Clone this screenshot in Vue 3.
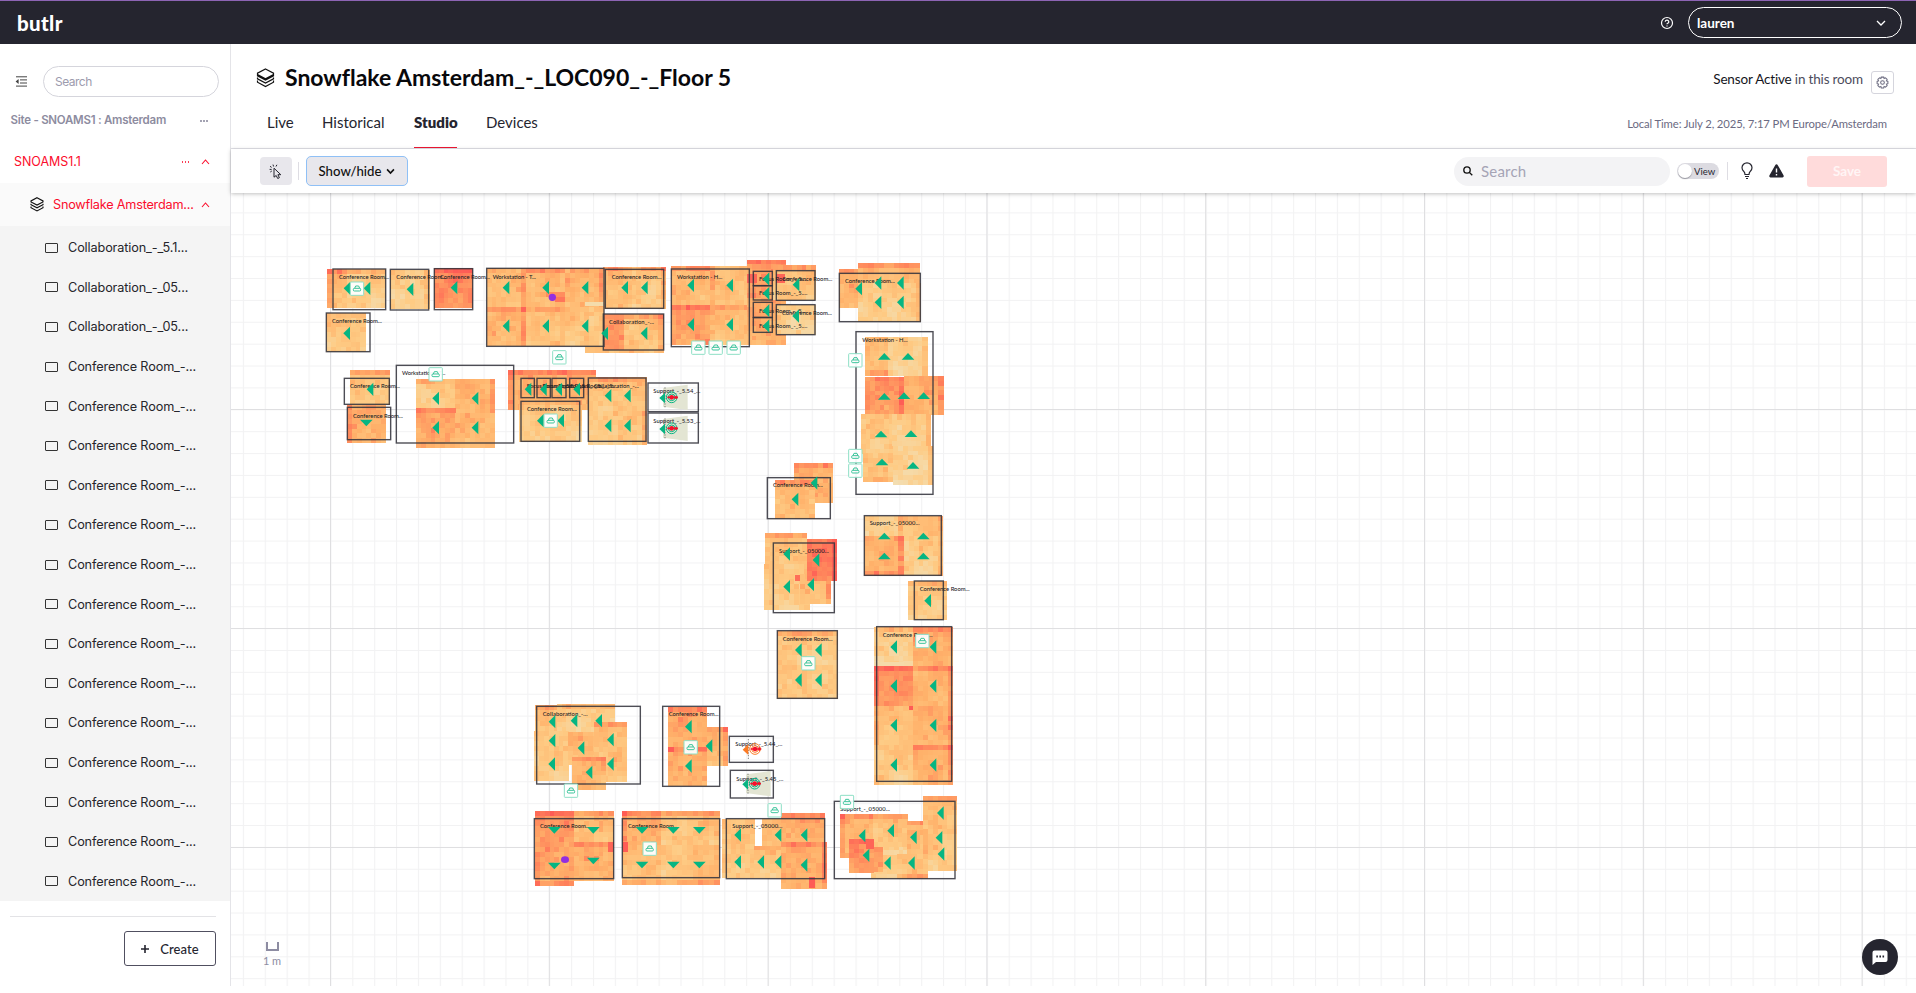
<script setup>
const rooms = [
  'Collaboration_-_5.1...', 'Collaboration_-_05...', 'Collaboration_-_05...',
  ...Array(14).fill('Conference Room_-...'),
]

const C = 'Conference Room...'
const F = 'Focus Room_-_5....'
const S = 'Support_-_05000...'
const L = 'Collaboration_-...'
const labelWidth = { [C]: 150, [F]: 145, [S]: 150, [L]: 135, 'Workstation - T...': 130, 'Workstation - H...': 136 }

// Every zone has its own origin on the plan and is drawn at 3 units per pixel.
// tiles: x, y, w, h, heat, hot edges    frames: x1, y1, x2, y2    arrows: x, y, direction
const zones = [
  {
    x: 310, y: 250,
    tiles: [
      [52, 57, 60, 117, .42, 'tl'], [110, 57, 117, 117, .24, 't'], [241, 60, 117, 117, .2, 'r'], [372, 55, 116, 118, .74, 't'],
      [49, 188, 117, 118, .3, ''], [530, 55, 117, 115, .4, 'r'], [647, 55, 118, 115, .42, 't'], [765, 55, 117, 115, .45, 'r'],
      [530, 170, 117, 118, .46, 'tr'], [647, 170, 118, 118, .36, 't'], [765, 170, 117, 118, .3, ''],
      [825, 289, 235, 19, .3, ''], [880, 50, 90, 126, .38, 't'], [965, 50, 101, 126, .28, 'tr'],
      [882, 193, 60, 107, .66, ''], [942, 193, 118, 107, .35, 'tr'],
      [121, 360, 118, 104, .33, 't'], [111, 465, 117, 113, .5, 'l'],
      [317, 386, 119, 89, .25, 't'], [436, 386, 118, 105, .48, 'r'], [317, 475, 119, 117, .55, 't'], [436, 490, 118, 102, .42, ''],
      [595, 361, 132, 117, .5, 'tl'], [727, 361, 131, 117, .5, 't'], [628, 450, 93, 124, .28, 't'], [721, 450, 93, 124, .26, 't'],
      [834, 380, 89, 102, .33, 't'], [923, 380, 88, 102, .35, 't'], [834, 482, 89, 102, .25, ''], [923, 482, 88, 102, .3, 'r'],
    ],
    hot: [[708, 127, 57, 14, .72], [736, 141, 29, 14, .85], [825, 155, 57, 14, .03]],
    frames: [
      [69, 57, 227, 179], [241, 58, 356, 180], [373, 56, 488, 179], [49, 189, 180, 305], [530, 55, 882, 289], [886, 58, 1061, 175],
      [880, 192, 1061, 300], [103, 385, 238, 463], [112, 472, 242, 569], [259, 346, 611, 579], [633, 385, 673, 443],
      [681, 385, 721, 443], [726, 385, 768, 443], [779, 385, 821, 443], [633, 454, 809, 574], [835, 384, 1008, 574],
      [1014, 399, 1165, 485], [1014, 489, 1165, 579],
    ],
    arrows: [
      [111, 115], [171, 115], [300, 118], [432, 113], [110, 250], [588, 113], [707, 113], [825, 113], [588, 228], [707, 228], [825, 228],
      [944, 113], [1003, 113], [884, 250], [1002, 250], [180, 418], [169, 519, 'd'], [377, 445], [495, 445], [377, 533], [495, 533],
      [654, 418], [700, 418], [746, 418], [800, 418], [691, 512], [752, 512], [894, 437], [952, 437], [894, 527], [952, 527],
    ],
    labels: [
      [87, 87, C], [259, 87, C], [390, 87, C], [66, 219, C], [548, 87, 'Workstation - T...'], [905, 87, C], [897, 222, L],
      [120, 414, C], [129, 504, C], [276, 375, 'Workstation - T...'], [650, 414, F], [697, 414, F], [744, 414, F], [780, 414, F],
      [852, 414, L], [651, 483, C], [1030, 429, 'Support_-_5.54_...'], [1030, 519, 'Support_-_5.53_...'],
    ],
    dots: [[727, 142, 11, 11]],
    badges: [[141, 116], [748, 322], [377, 373], [722, 512]],
    sensors: [[1085, 442, '#08b482', 1], [1085, 535, '#08b482', 1]],
  },
  {
    x: 660, y: 250,
    tiles: [
      [33, 48, 117, 117, .42, 't'], [150, 48, 118, 117, .37, 'l'], [33, 165, 117, 118, .6, 't'], [150, 165, 118, 118, .38, 't'],
      [260, 29, 117, 115, .62, 't'], [260, 144, 117, 141, .52, ''], [340, 45, 127, 105, .35, 't'], [348, 165, 118, 90, .18, ''],
      [537, 57, 60, 117, .48, 't'], [595, 40, 183, 62, .42, 't'], [595, 100, 187, 115, .25, 'r'],
    ],
    hot: [[260, 72, 30, 28, .95], [348, 72, 28, 28, .95]],
    frames: [
      [34, 57, 268, 290], [280, 64, 337, 107], [280, 107, 337, 150], [280, 157, 337, 202], [280, 203, 337, 247],
      [349, 62, 465, 151], [349, 164, 465, 254], [538, 70, 781, 215],
    ],
    arrows: [
      [92, 106], [209, 106], [92, 224], [209, 224], [318, 87], [318, 130], [318, 182], [318, 228], [408, 104], [407, 198],
      [596, 116], [654, 99], [721, 99], [654, 157], [721, 157],
    ],
    labels: [
      [51, 87, 'Workstation - H...'], [297, 93, F], [297, 136, F], [297, 189, F], [297, 234, F], [367, 93, C], [366, 195, C], [555, 99, C],
    ],
    badges: [[115, 293], [167, 293], [221, 293]],
  },
  {
    x: 820, y: 320,
    tiles: [
      [135, 50, 70, 116, .4, 'b'], [205, 50, 117, 116, .18, 'r'], [135, 170, 117, 113, .66, 'r'], [252, 168, 118, 116, .5, 'r'],
      [124, 283, 96, 118, .3, ''], [216, 283, 115, 95, .22, 'r'], [128, 400, 92, 84, .3, 'b'], [220, 377, 118, 117, .15, 'r'],
      [133, 587, 117, 60, .2, 'r'], [250, 587, 119, 60, .38, 'r'], [133, 647, 117, 120, .5, 'rb'], [252, 647, 117, 120, .24, 'r'],
      [264, 783, 117, 117, .28, 't'],
    ],
    frames: [[108, 35, 339, 523], [133, 587, 364, 766], [283, 783, 370, 899]],
    arrows: [
      [193, 109, 'u'], [264, 109, 'u'], [193, 229, 'u'], [252, 227, 'u'], [311, 227, 'u'], [183, 342, 'u'], [273, 341, 'u'],
      [186, 426, 'u'], [279, 436, 'u'], [193, 648, 'u'], [310, 648, 'u'], [193, 708, 'u'], [310, 708, 'u'], [323, 842],
    ],
    labels: [[127, 66, 'Workstation - H...'], [149, 615, S], [299, 813, C]],
    badges: [[106, 121], [106, 408], [106, 452]],
  },
  {
    x: 750, y: 450,
    tiles: [
      [132, 40, 117, 117, .48, 't'], [76, 90, 117, 117, .4, 't'],
      [46, 250, 125, 125, .36, 't'], [42, 342, 136, 137, .26, ''], [150, 372, 92, 90, .4, 'r'], [170, 266, 90, 126, .82, 'r'],
      [82, 542, 90, 102, .32, 't'], [172, 542, 91, 102, .24, 't'], [82, 644, 90, 103, .32, ''], [172, 644, 91, 103, .26, ''],
      [372, 530, 118, 119, .2, 't'], [490, 530, 118, 119, .52, 't'], [372, 649, 118, 118, .7, 'tl'], [490, 649, 118, 118, .45, 'rt'],
      [372, 767, 118, 119, .33, 'l'], [490, 767, 118, 119, .5, 'r'], [372, 886, 118, 118, .28, ''], [490, 886, 118, 118, .5, 'tr'],
    ],
    hot: [[134, 375, 16, 18, .9], [372, 635, 90, 14, .05], [476, 767, 14, 14, 1]],
    frames: [[52, 83, 241, 206], [70, 279, 253, 488], [82, 542, 262, 745], [380, 530, 605, 994]],
    arrows: [
      [192, 99], [135, 148], [110, 312], [198, 330], [110, 410], [182, 404], [145, 600], [205, 600], [145, 690], [205, 690],
      [431, 591], [549, 591], [431, 708], [549, 708], [431, 826], [549, 826], [431, 945], [549, 945],
    ],
    labels: [[69, 111, C], [87, 309, S], [98, 573, C], [398, 561, C]],
    badges: [[175, 640], [517, 573]],
  },
  {
    x: 520, y: 690,
    tiles: [
      [45, 45, 100, 110, .34, 't'], [110, 42, 175, 82, .22, 't'], [42, 122, 103, 150, .28, ''], [145, 125, 88, 100, .4, ''],
      [222, 97, 98, 177, .38, 't'], [156, 200, 101, 98, .45, 't'],
      [445, 52, 116, 118, .54, 't'], [445, 170, 116, 118, .5, 't'], [561, 110, 63, 117, .42, 'tr'],
      [45, 363, 117, 123, .64, 't'], [162, 363, 118, 93, .4, 't'], [45, 486, 117, 100, .54, 'lb'], [162, 456, 118, 116, .5, 't'],
      [306, 363, 117, 120, .5, 'lt'], [423, 363, 95, 103, .32, 't'], [518, 363, 80, 103, .36, 't'],
      [306, 466, 117, 118, .38, 'b'], [423, 466, 95, 118, .3, 'b'], [518, 466, 80, 118, .42, 'b'],
      [605, 388, 98, 176, .32, ''], [725, 388, 60, 80, .38, ''], [703, 467, 80, 97, .3, 't'],
      [782, 370, 133, 90, .52, 't'], [782, 457, 138, 138, .52, 'tr'],
    ],
    hot: [[445, 170, 18, 15, 1], [531, 170, 30, 12, .9], [309, 457, 15, 30, 1], [867, 560, 18, 33, 1], [264, 456, 15, 30, .95]],
    frames: [
      [50, 49, 361, 282], [428, 49, 599, 289], [628, 139, 760, 217], [631, 241, 760, 324], [43, 386, 281, 566], [307, 386, 599, 563],
      [619, 386, 914, 566],
    ],
    arrows: [
      [96, 95], [162, 92], [236, 92], [96, 152], [183, 174], [271, 149], [95, 222], [207, 247], [271, 222], [505, 110], [567, 168],
      [505, 228], [103, 421, 'd'], [220, 421, 'd'], [103, 528, 'd'], [220, 513, 'd'], [366, 421, 'd'], [460, 421, 'd'], [538, 421, 'd'],
      [366, 525, 'd'], [460, 525, 'd'], [538, 525, 'd'], [653, 435], [774, 435], [852, 435], [653, 516], [722, 516], [774, 516], [852, 525],
    ],
    labels: [
      [68, 78, L], [446, 78, C], [646, 168, 'Support_-_5.44_...'], [649, 273, 'Support_-_5.45_...'], [60, 414, C], [324, 414, C], [637, 414, S],
    ],
    dots: [[135, 509, 12, 10]],
    badges: [[153, 302], [512, 172], [389, 476], [764, 361]],
    sensors: [[705, 177, '#fb7a24', 0], [704, 281, '#08b482', 1]],
  },
  {
    x: 800, y: 780,
    tiles: [
      [120, 102, 100, 130, .42, 'tl'], [221, 195, 164, 32, .14, ''], [220, 102, 102, 98, .34, 't'], [320, 122, 68, 100, .42, 't'],
      [370, 48, 100, 100, .38, 't'], [370, 148, 100, 124, .28, 'l'], [213, 225, 80, 72, .26, ''], [291, 222, 92, 74, .35, 'b'],
      [147, 177, 74, 100, .68, 't'], [221, 200, 27, 76, .65, ''],
    ],
    hot: [[197, 180, 24, 26, .95]],
    frames: [[103, 64, 465, 296]],
    arrows: [[186, 167], [272, 152], [340, 172], [421, 99], [417, 173], [423, 222], [198, 226], [262, 249], [334, 249]],
    labels: [[120, 93, S]],
    badges: [[141, 66]],
  },
]

const stops = [[243, 222, 178], [254, 203, 132], [255, 177, 106], [255, 136, 92], [254, 92, 86]]
function colour(v) {
  const t = Math.min(.999, Math.max(0, v)) * 4
  const i = Math.floor(t)
  const c = stops[i].map((a, k) => Math.round(a + (stops[i + 1][k] - a) * (t - i)))
  return `rgb(${c.join(',')})`
}
let state = 4211
function random() {
  state = (state * 16807) % 2147483647
  return state / 2147483647
}
function cellsOf([x, y, w, h, heat, edges]) {
  const nx = Math.max(1, Math.round(w / 14.7))
  const ny = Math.max(1, Math.round(h / 14.7))
  const px = random() * 6
  const py = random() * 6
  const cells = []
  for (let j = 0; j < ny; j++) {
    for (let i = 0; i < nx; i++) {
      // the lower middle of a sensor tile reads cooler than its top rows
      let v = heat + .03 - (j / ny) * .1 + (random() - .5) * .15 + Math.sin(i * .8 + px) * Math.cos(j * .7 + py) * .08
      if (random() > .92) v += .12
      const edge = .14 + random() * .12
      if (edges.includes('t') && j === 0) v += edge
      if (edges.includes('b') && j === ny - 1) v += edge
      if (edges.includes('l') && i === 0) v += edge
      if (edges.includes('r') && i === nx - 1) v += edge
      cells.push({ x: x + i * w / nx, y: y + j * h / ny, w: w / nx + .6, h: h / ny + .6, fill: colour(v) })
    }
  }
  return cells
}
for (const z of zones) z.cells = z.tiles.flatMap(cellsOf)

const arrowShape = {
  l: '-10,0 10,-20 10,20',
  u: '0,-10 19,10 -19,10',
  d: '0,10 19,-10 -19,-10',
}
</script>

<template>
  <div class="app">
    <header class="topbar">
      <span class="logo">butlr</span>
      <div class="account">
        <svg class="help" viewBox="0 0 14 14"><circle cx="7" cy="7" r="5.500" /><path d="M5.200 5.700a1.800 1.700 0 1 1 2.500 1.600q-.7.3-.7 1" /><path d="M7 9.600v.9" /></svg>
        <div class="user"><span>lauren</span><svg viewBox="0 0 10 6"><path d="M1 1l4 4 4-4" /></svg></div>
      </div>
    </header>

    <div class="body">
      <aside class="sidebar">
        <div class="find">
          <svg viewBox="0 0 12 11"><path d="M1 .8h11M5 3.900h7M5 7h7M1 10.100h11" /><path class="solid" d="M3.600 3v5L.6 5.500z" /></svg>
          <div class="input">Search</div>
        </div>
        <div class="site"><span>Site - SNOAMS1 : Amsterdam</span><i class="dots" /></div>
        <div class="building"><span>SNOAMS1.1</span><i class="dots" /><svg class="caret" viewBox="0 0 9 6"><path d="M1 5l3.500-4L8 5" /></svg></div>
        <div class="floor">
          <svg class="layers" viewBox="0 0 18 20"><path d="M9 1L17 5.200V6.500L9 10.700L1 6.500V5.200ZM1 9V10.200L9 14.400L17 10.200V9M1 12.800V14.200L9 18.600L17 14.200V12.800" /></svg>
          <span>Snowflake Amsterdam...</span>
          <svg class="caret" viewBox="0 0 9 6"><path d="M1 5l3.500-4L8 5" /></svg>
        </div>
        <ul class="rooms">
          <li v-for="(r, i) in rooms" :key="i"><i /><span>{{ r }}</span></li>
        </ul>
        <div class="foot">
          <button class="create"><svg viewBox="0 0 8 8"><path d="M4 0v8M0 4h8" /></svg><span>Create</span></button>
        </div>
      </aside>

      <main class="main">
        <section class="head">
          <div class="title-row">
            <svg class="layers" viewBox="0 0 18 20"><path d="M9 1L17 5.200V6.500L9 10.700L1 6.500V5.200ZM1 6.500V7.800L9 12L17 7.800V6.500M1 9.500V10.800L9 15L17 10.800V9.500M1 12.500V14.200L9 18.600L17 14.200V12.500" /></svg>
            <h1>Snowflake Amsterdam_-_LOC090_-_Floor 5</h1>
            <p class="sensor"><b>Sensor Active</b> in this room</p>
            <button class="gear"><svg viewBox="0 0 14 14"><path d="M5.700 1.200h2.600l.4 1.500 1.500-.8 1.800 1.800-.8 1.500 1.600.5v2.600l-1.600.5.8 1.500-1.800 1.800-1.500-.8-.4 1.500H5.700l-.4-1.500-1.500.8L2 10.300l.8-1.500-1.600-.5V5.700l1.600-.5L2 3.700l1.800-1.800 1.500.8z" /><circle cx="7" cy="7" r="2" /></svg></button>
          </div>
          <div class="tab-row">
            <nav class="tabs">
              <a class="t1">Live</a><a class="t2">Historical</a><a class="t3 on">Studio</a><a class="t4">Devices</a>
            </nav>
            <span class="time">Local Time: July 2, 2025, 7:17 PM Europe/Amsterdam</span>
          </div>
        </section>

        <section class="tools">
          <button class="pointer"><svg viewBox="0 0 14 15"><path d="M5 4.200v9l2.200-1.700 1.500 3 1.700-.8-1.500-3h2.900z" /><path d="M4.600 2.500L4 .6M7 2.500L7.900.8M2.600 3.400L1 2.300M2.600 5.400H.6M2.800 7L1.300 8" /></svg></button>
          <i class="sep" />
          <button class="toggle"><span>Show/hide</span><svg viewBox="0 0 10 7"><path d="M1.200 1.200L5 5.200l3.800-4" /></svg></button>
          <div class="search"><svg viewBox="0 0 11 11"><circle cx="4.400" cy="4.400" r="3.500" /><path d="M7 7l3.200 3.200" /></svg><span>Search</span></div>
          <div class="switch"><i /><span>View</span></div>
          <i class="sep sep2" />
          <svg class="bulb" viewBox="0 0 12 18"><path d="M4 12.500q0-1.800-1.400-3.300A5 5 0 0 1 1 5.800a5 5 0 0 1 10 0q0 2-1.600 3.400Q8 10.700 8 12.500zM4 14.500h4M5 16.500h2" /></svg>
          <svg class="warn" viewBox="0 0 15 14"><path d="M7.500.3q.8 0 1.300.9l5.700 10q.8 2-1 2.200h-12q-1.800-.2-1-2.200l5.700-10q.5-.9 1.300-.9z" /><path class="mark" d="M7.500 4.500v4M7.500 10v1.400" /></svg>
          <button class="save">Save</button>
        </section>

        <section class="canvas">
          <svg class="plan" viewBox="231 193 1685 793">
            <defs>
              <pattern id="minor" x="330.400" y="409.300" width="21.880" height="21.880" patternUnits="userSpaceOnUse">
                <path d="M0 .5H21.880M.5 0V21.880" stroke="#f2f2f3" stroke-width="1.200" fill="none" />
              </pattern>
              <g id="badge">
                <rect class="badge" x="-20" y="-20" width="40" height="40" rx="2" />
                <path class="badge-icon" d="M-11 2q0-3 3-3H8q3 0 3 3v2q0 3-3 3H-8q-3 0-3-3zM-7-1l3-7H5l3 7" />
              </g>
            </defs>
            <rect x="231" y="193" width="1685" height="793" fill="url(#minor)" />
            <path v-for="n in 8" :key="'v' + n" class="major" :d="`M${330.500 + (n - 1) * 218.800} 193V986`" />
            <path v-for="n in 3" :key="'h' + n" class="major" :d="`M231 ${409.500 + (n - 1) * 219}H1916`" />
            <g v-for="(z, k) in zones" :key="k" :transform="`translate(${z.x} ${z.y}) scale(.33333)`">
              <g shape-rendering="crispEdges">
                <rect v-for="(c, i) in z.cells" :key="i" :x="c.x" :y="c.y" :width="c.w" :height="c.h" :fill="c.fill" />
                <rect v-for="(c, i) in z.hot" :key="'h' + i" :x="c[0]" :y="c[1]" :width="c[2]" :height="c[3]" :fill="colour(c[4])" />
              </g>
              <path v-for="(s, i) in (z.sensors || []).filter(s => s[3])" :key="'c' + i" class="cone" :d="`M${s[0] - 26} ${s[1] - 28}l74-10v76l-74-10z`" />
              <rect v-for="(f, i) in z.frames" :key="'f' + i" class="frame" :x="f[0]" :y="f[1]" :width="f[2] - f[0]" :height="f[3] - f[1]" />
              <text v-for="(l, i) in z.labels" :key="'l' + i" class="label" :x="l[0]" :y="l[1]" :textLength="labelWidth[l[2]] || 141">{{ l[2] }}</text>
              <polygon v-for="(a, i) in z.arrows" :key="'a' + i" class="arrow" :transform="`translate(${a[0]} ${a[1]})`" :points="arrowShape[a[2] || 'l']" />
              <ellipse v-for="(d, i) in z.dots" :key="'d' + i" class="dot" :cx="d[0]" :cy="d[1]" :rx="d[2]" :ry="d[3]" />
              <g v-for="(s, i) in z.sensors" :key="'s' + i" :transform="`translate(${s[0]} ${s[1]})`">
                <path d="M-20-30V32" stroke="#666" stroke-width="2.500" stroke-dasharray="4 4" />
                <path d="M-37 2l17-16v32z" :fill="s[2]" />
                <g fill="none" stroke-width="3" :stroke="s[2]"><circle r="16" /><circle r="10" /></g>
                <circle r="7" fill="#f3122b" /><path d="M-13 0H19M13-5v10" stroke="#f3122b" stroke-width="5" />
              </g>
              <use v-for="(b, i) in z.badges" :key="'b' + i" href="#badge" :x="b[0]" :y="b[1]" />
            </g>
          </svg>
          <div class="scale"><i /><span>1 m</span></div>
          <button class="chat"><svg viewBox="0 0 16 15"><path d="M2.500.5h11q2 0 2 2v7.500q0 2-2 2H4l-3.500 3V2.500q0-2 2-2z" /><path class="pips" d="M4.300 6.500h1.600M7.400 6.500H9M10.500 6.500h1.600" /></svg></button>
        </section>
      </main>
    </div>
  </div>
</template>

<style>
html, body { margin: 0; background: #fff; overflow: hidden; }
</style>

<style scoped>
.app { height: 993px; font-family: Lato, "Open Sans", sans-serif; color: #25252f; display: flex; flex-direction: column; overflow: hidden; }
* { box-sizing: border-box; }
svg { fill: none; stroke: currentColor; display: block; flex: none; }
button { font: inherit; color: inherit; padding: 0; border: 0; flex: none; display: flex; align-items: center; justify-content: center; }
.topbar { height: 44px; flex: none; background: #25252f; border-top: 1px solid #8d64b4; display: flex; align-items: center; justify-content: space-between; padding: 0 14px 0 17px; color: #fff; }
.logo { font-size: 20.500px; font-weight: 900; letter-spacing: .35px; line-height: 20px; }
.account { display: flex; align-items: center; gap: 14px; }
.help { width: 14px; height: 14px; stroke-width: 1.200; }
.user { width: 214px; height: 31px; border: 1px solid #fff; border-radius: 16px; display: flex; align-items: center; justify-content: space-between; padding: 0 15px 0 8px; font-size: 13.500px; font-weight: 700; }
.user svg { width: 10px; height: 6px; stroke-width: 1.300; }
.body { flex: 1; display: flex; min-height: 0; }

.sidebar { width: 231px; height: 942px; flex: none; border-right: 1px solid #e4e4e8; font-family: Inter, sans-serif; font-size: 12.500px; }
.find { display: flex; align-items: center; padding: 22px 11px 0 15px; justify-content: space-between; }
.find svg { width: 12px; height: 11px; stroke-width: 1; color: #444; }
.find .solid { fill: #444; stroke: none; }
.input { width: 176px; height: 31px; border: 1px solid #d5d5dc; border-radius: 16px; line-height: 29px; padding-left: 11px; color: #9c9bad; font-size: 12px; letter-spacing: -.5px; }
.site { display: flex; justify-content: space-between; padding: 0 22px 0 10.500px; height: 47px; line-height: 47px; color: #8d8ca0; font-weight: 600; font-size: 11.500px; letter-spacing: -.25px; }
.site, .building, .floor { align-items: center; }
.dots { width: 8px; height: 2px; background: repeating-linear-gradient(90deg, currentColor 0 1.500px, transparent 1.500px 3px); opacity: .8; }
.building { display: flex; height: 39px; padding: 0 20px 4px 14px; color: #fb0d2c; }
.building span { flex: 1; letter-spacing: -.05px; }
.building .dots { margin-right: 11px; }
.caret { width: 9px; height: 6px; stroke-width: 1.100; color: #fb0d2c; }
.floor { display: flex; height: 43px; background: #fafafa; padding: 0 20px 0 30px; color: #fb0d2c; }
.floor span { flex: 1; padding-left: 9px; font-size: 12.700px; letter-spacing: -.22px; white-space: nowrap; }
.floor .layers { width: 14px; height: 15px; color: #111; stroke-width: 1.500; }
.rooms { list-style: none; margin: 0; padding: 2px 0 0 45px; height: 675px; background: #f4f4f4; }
.rooms li { height: 39.600px; display: flex; align-items: center; gap: 10px; color: #25252b; }
.rooms i { width: 13px; height: 10px; border: 1.500px solid #333; border-radius: 1px; }
.rooms span { font-size: 12.700px; letter-spacing: -.13px; }
.foot { margin: 15px 14px 0 10px; border-top: 1px solid #e3e3e6; display: flex; justify-content: flex-end; padding-top: 14px; }
.create { width: 92px; height: 35px; border: 1px solid #504f60; border-radius: 3px; background: #fff; gap: 11px; font-family: Lato, sans-serif; font-size: 13px; font-weight: 500; letter-spacing: .1px; }
.create svg { width: 8px; height: 8px; stroke-width: 1.600; }

.main { flex: 1; display: flex; flex-direction: column; min-width: 0; }
.head { height: 105px; flex: none; border-bottom: 1px solid #e2e2e8; }
.title-row { height: 62px; display: flex; align-items: flex-start; padding: 0 22px 0 25px; }
.title-row .layers { width: 19px; height: 20px; margin-top: 24px; stroke-width: 1.200; color: #111; }
h1 { flex: 1; margin: 18px 0 0 10px; font-size: 23px; line-height: 30px; font-weight: 700; letter-spacing: -.02px; color: #08080b; }
.sensor { margin: 26px 8px 0 0; font-size: 13.500px; letter-spacing: -.17px; line-height: 18px; color: #4d4c5c; }
.sensor b { font-weight: 400; color: #15151c; }
.gear { margin-top: 27px; width: 23px; height: 23px; border: 1px solid #d5d5dd; border-radius: 3px; background: #fff; color: #6c6b80; }
.gear svg { width: 13px; height: 13px; stroke-width: 1.100; }
.tab-row { display: flex; justify-content: space-between; height: 42px; padding: 0 29px 0 36px; }
.tabs { display: flex; gap: 28px; font-size: 15px; line-height: 33px; }
.tabs a { white-space: nowrap; }
.t1 { width: 27px; } .t2 { width: 64px; } .t3 { width: 43px; } .t4 { width: 52px; margin-left: 1px; }
.tabs .on { font-weight: 800; line-height: 32px; border-bottom: 1px solid #ee1733; height: 42px; }
.time { font-size: 11.300px; letter-spacing: -.12px; line-height: 36px; color: #6b6a82; }
.tools { height: 44px; flex: none; display: flex; align-items: center; padding: 0 29px; background: #fff; position: relative; z-index: 1; box-shadow: 0 1px 4px rgba(0, 0, 0, .25); }
.pointer { width: 32px; height: 28px; background: #e8e7ec; border-radius: 4px; }
.pointer svg { width: 14px; height: 15px; stroke-width: 1; }
.sep { width: 1px; height: 18px; background: #dedde3; margin: 0 7px 0 6px; }
.toggle { width: 102px; height: 30px; border: 1px solid #8fc0f6; border-radius: 5px; background: #e8e7ec; gap: 5px; font-size: 13.200px; font-weight: 500; color: #111; }
.toggle svg { width: 9px; height: 7px; stroke-width: 1.800; }
.search { margin-left: auto; width: 216px; height: 29px; border-radius: 15px; background: #f3f3f5; display: flex; align-items: center; gap: 8px; padding-left: 9px; color: #a5a4b5; font-size: 15px; letter-spacing: .2px; }
.search svg { width: 10px; height: 10px; color: #111; stroke-width: 1.500; }
.switch { width: 42px; height: 16px; border-radius: 8px; margin-left: 7px; background: #dcdbe1; display: flex; align-items: center; font-size: 9.500px; gap: 2px; }
.switch i { width: 14px; height: 14px; margin-left: 1px; border-radius: 50%; background: #fff; box-shadow: 0 1px 1px #9998a0; }
.sep2 { margin: 0 13px 0 8px; }
.bulb { width: 12px; height: 18px; stroke-width: 1.200; }
.warn { width: 15px; height: 14px; margin: 0 23px 0 16px; fill: #25252f; stroke: none; }
.mark { stroke: #fff; stroke-width: 1.400; }
.save { width: 80px; height: 31px; border-radius: 3px; background: #ffdbdb; color: #fff5f5; font-size: 13.500px; font-weight: 700; }
.canvas { height: 793px; flex: none; position: relative; }
.plan { width: 1685px; height: 793px; stroke: none; }
.major { stroke: #dfdfe1; stroke-width: 1; }
.frame { stroke: #34343e; stroke-width: 4.200; stroke-opacity: .88; }
.cone { fill: #e3e5d3; }
.label { font-size: 17.500px; fill: #202026; font-weight: 500; }
.arrow { fill: #06b582; }
.dot { fill: #922ee0; }
.badge { fill: #fff; fill-opacity: .94; stroke: #8edfc5; stroke-width: 3; }
.badge-icon { stroke: #2dbf93; stroke-width: 2.800; }
.scale { position: absolute; left: 32px; top: 749px; width: 18px; display: flex; flex-direction: column; align-items: center; gap: 3px; color: #8d8ca2; font-size: 11px; line-height: 14px; white-space: nowrap; }
.scale i { width: 13px; height: 9px; border: 2px solid #8d8ca2; border-top: 0; }
.chat { position: absolute; left: 1631px; top: 746px; width: 36px; height: 36px; border-radius: 50%; background: #25252f; color: #fff; }
.chat svg { width: 16px; height: 15px; fill: #fff; stroke: none; }
.pips { stroke: #25252f; stroke-width: 2; }
</style>
